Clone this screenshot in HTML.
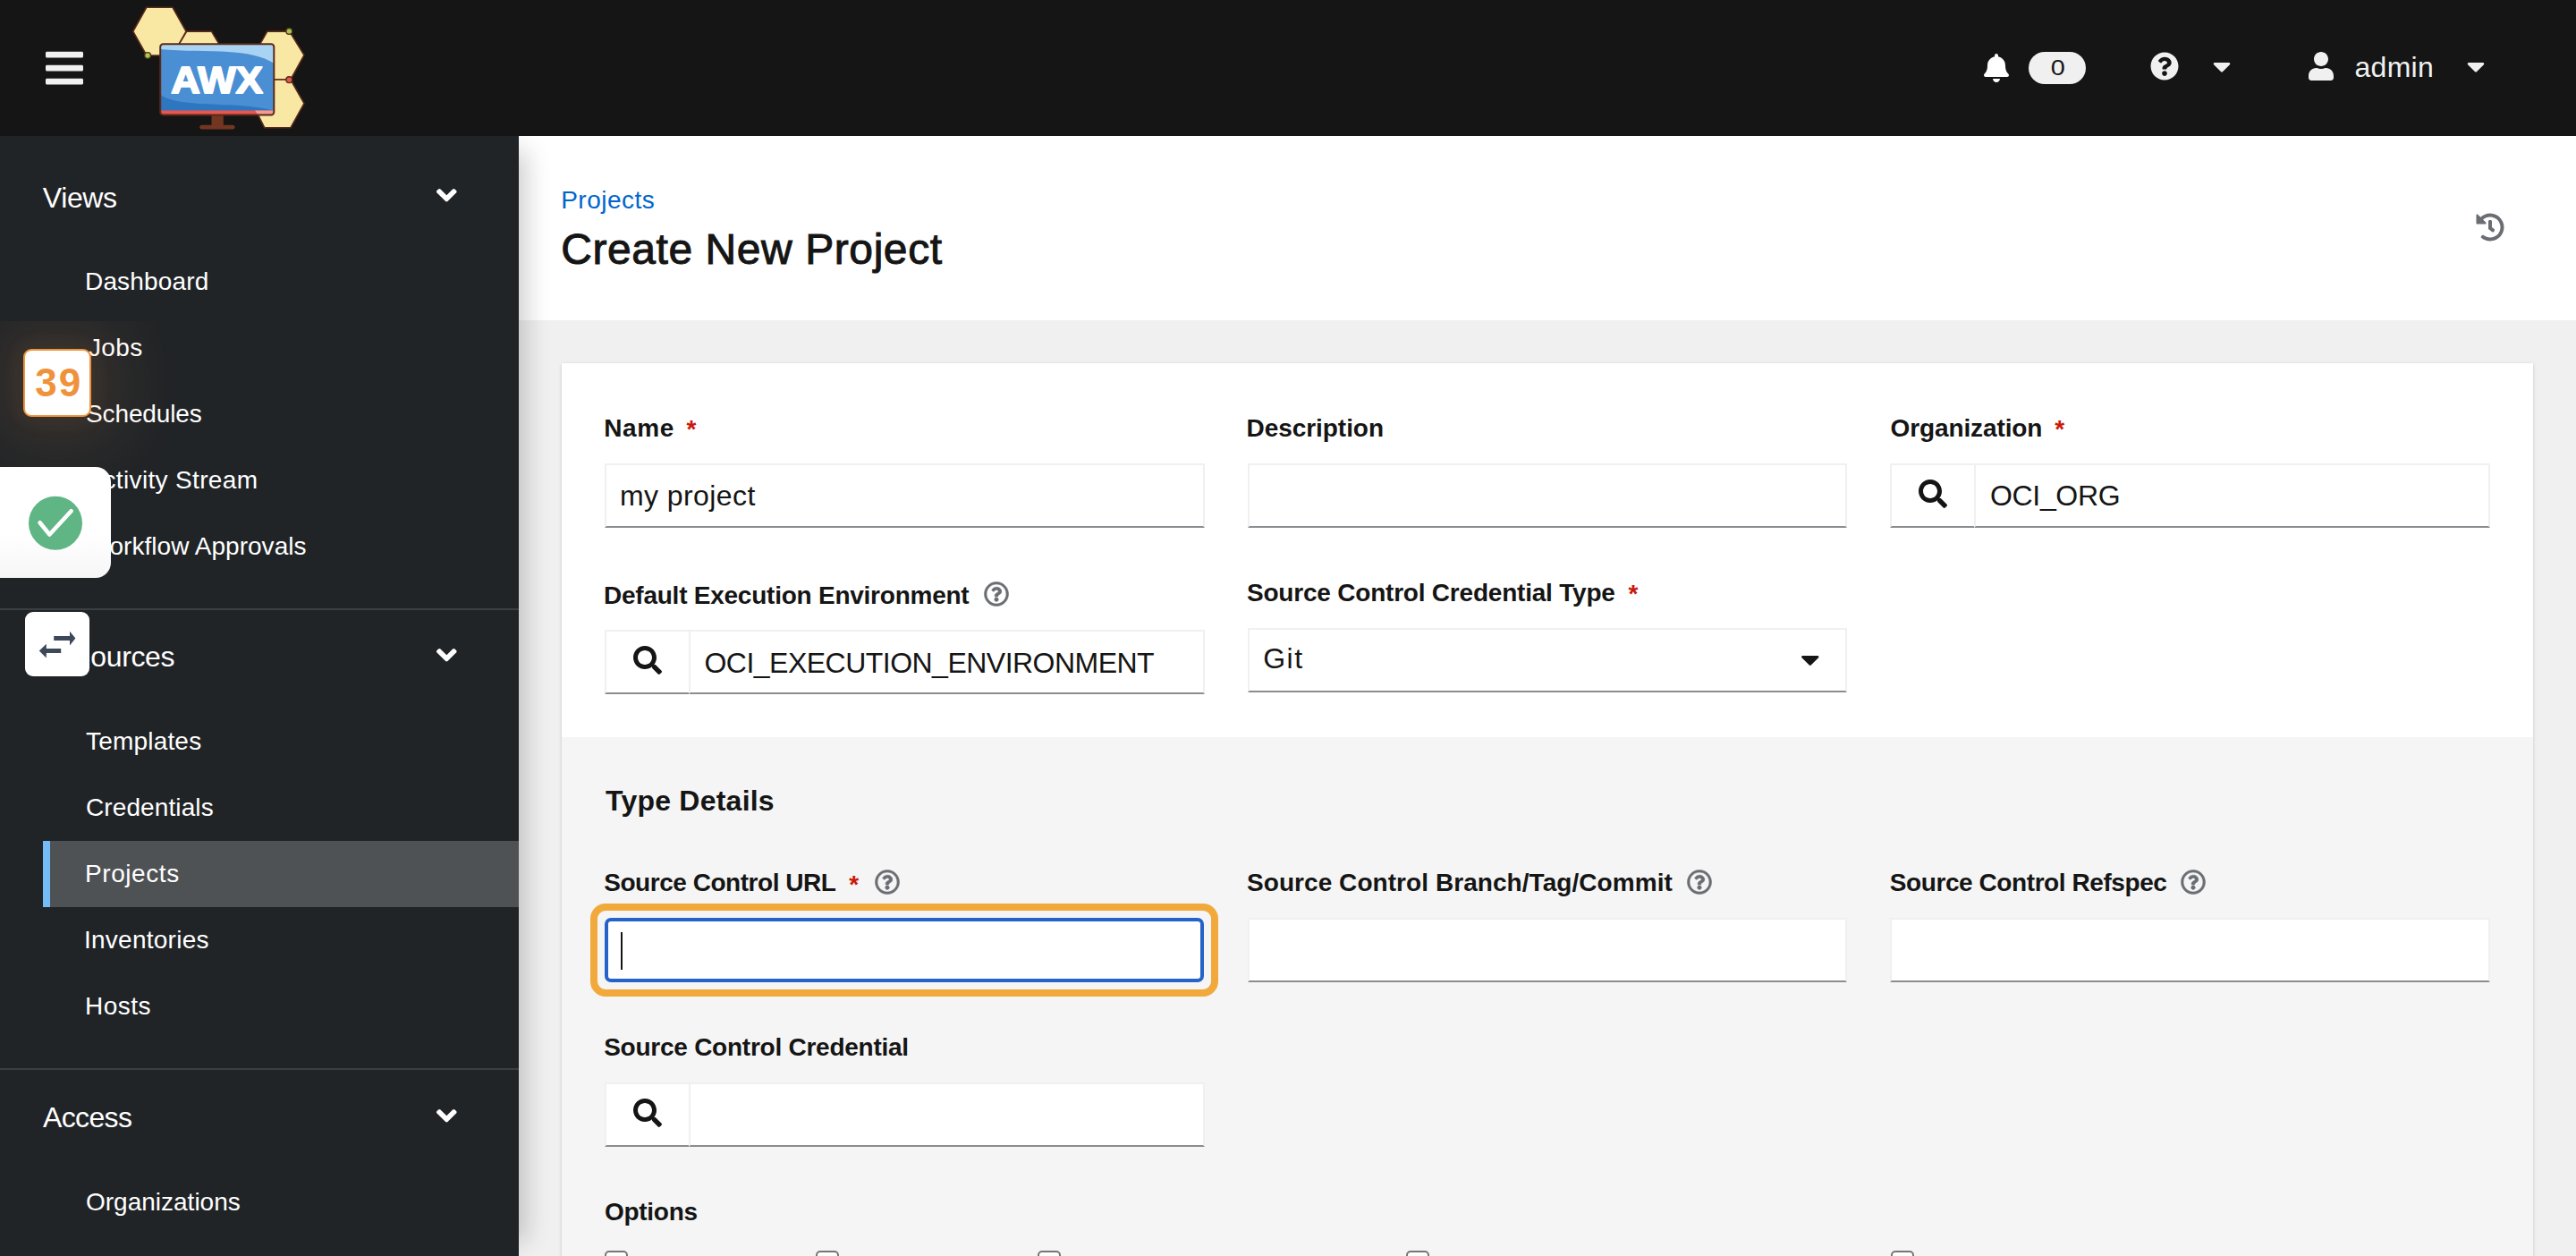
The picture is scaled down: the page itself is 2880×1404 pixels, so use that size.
<!DOCTYPE html>
<html lang="en"><head><meta charset="utf-8"><title>AWX - Create New Project</title>
<style>
*{box-sizing:border-box}
html,body{margin:0;padding:0}
body{width:2880px;height:1404px;overflow:hidden;position:relative;background:#f0f0f0;font-family:"Liberation Sans",sans-serif;color:#151515}
.abs,.ic,.t{position:absolute}
.ic{display:block;overflow:visible}
.t{white-space:nowrap;line-height:1;margin:0;padding:0}
#hdr{left:0;top:0;width:2880px;height:152px;background:#151515}
#side{left:0;top:152px;width:580px;height:1252px;background:#212427;box-shadow:24px 0 26px -16px rgba(3,3,3,.2)}
.sep{left:0;width:580px;height:2px;background:#3c3f42}
#cur{left:48px;top:940px;width:532px;height:74px;background:#4f5255;border-left:8px solid #73bcf7}
#top{left:580px;top:152px;width:2300px;height:206px;background:#fff}
#card{left:628px;top:406px;width:2204px;height:1100px;background:#fff;box-shadow:0 2px 4px rgba(3,3,3,.12),0 0 4px rgba(3,3,3,.06)}
#sub{left:628px;top:824px;width:2204px;height:700px;background:#f5f5f5}
.rq{color:#c9190b;font-size:28px;font-weight:bold}
.inp{background:#fff;border:2px solid #f0f0f0;border-bottom-color:#8a8d90;height:72px}
.cb{width:26px;height:26px;top:1398px;background:#fff;border:2px solid #767676;border-radius:5px}
</style></head><body>

<main>
<div class="abs" id="top"></div>
<div class="t " id="bc" style="left:627.2px;top:210px;font-size:28px;color:#0066cc;font-weight:normal;letter-spacing:0.5px;">Projects</div>
<h1 class="t " id="h1" style="left:627.2px;top:255px;font-size:48px;color:#151515;font-weight:normal;letter-spacing:0.57px;-webkit-text-stroke:1px #151515;">Create New Project</h1>
<svg class="ic" viewBox="0 0 512 512" style="left:2768px;top:238px;width:32.0px;height:32px;fill:#6a6e73;"><path d="M504 255.531c.253 136.640-111.180 248.372-247.820 248.468-59.015.042-113.223-20.530-155.822-54.911-11.077-8.940-11.905-25.541-1.839-35.607l11.267-11.267c8.609-8.609 22.353-9.551 31.891-1.984C173.062 425.135 212.781 440 256 440c101.705 0 184-82.311 184-184 0-101.705-82.311-184-184-184-48.814 0-93.149 18.969-126.068 49.932l50.754 50.754c10.080 10.080 2.941 27.314-11.313 27.314H24c-8.837 0-16-7.163-16-16V38.627c0-14.254 17.234-21.393 27.314-11.314l49.372 49.372C129.209 34.136 189.552 8 256 8c136.810 0 247.747 110.780 248 247.531zm-180.912 78.784l9.823-12.630c8.138-10.463 6.253-25.542-4.210-33.679L288 256.349V152c0-13.255-10.745-24-24-24h-16c-13.255 0-24 10.745-24 24v135.651l65.409 50.874c10.463 8.137 25.541 6.253 33.679-4.210z"/></svg>
<div class="abs" id="card"></div>
<div class="abs" id="sub"></div>
<div class="t " id="l_name" style="left:675.2px;top:465px;font-size:28px;color:#151515;font-weight:bold;letter-spacing:0.6px;">Name</div>
<div class="t rq" style="left:767.5px;top:466px">*</div>
<div class="abs inp" style="left:676px;top:518px;width:670.67px;height:72px"></div>
<div class="t " id="v_name" style="left:693px;top:538px;font-size:32px;color:#151515;font-weight:normal;letter-spacing:0.41px;">my project</div>
<div class="t " id="l_desc" style="left:1393.5px;top:465px;font-size:28px;color:#151515;font-weight:bold;letter-spacing:-0.05px;">Description</div>
<div class="abs inp" style="left:1394.67px;top:518px;width:670.67px;height:72px"></div>
<div class="t " id="l_org" style="left:2113.5px;top:465px;font-size:28px;color:#151515;font-weight:bold;letter-spacing:-0.11px;">Organization</div>
<div class="t rq" style="left:2297.25px;top:466px">*</div>
<div class="abs inp" style="left:2113.33px;top:518px;width:96px;height:72px"></div>
<svg class="ic" viewBox="0 0 512 512" style="left:2145.33px;top:536px;width:32.0px;height:32px;fill:#151515;"><path d="M505 442.7L405.3 343c-4.500-4.500-10.600-7-17-7H372c27.600-35.300 44-79.700 44-128C416 93.100 322.900 0 208 0S0 93.100 0 208s93.100 208 208 208c48.300 0 92.700-16.400 128-44v16.300c0 6.400 2.500 12.500 7 17l99.700 99.700c9.400 9.400 24.600 9.400 33.900 0l28.300-28.300c9.400-9.400 9.400-24.600.1-34zM208 336c-70.700 0-128-57.200-128-128 0-70.700 57.200-128 128-128 70.700 0 128 57.200 128 128 0 70.700-57.200 128-128 128z"/></svg>
<div class="abs inp" style="left:2207.33px;top:518px;width:576.67px;height:72px"></div>
<div class="t " id="v_org" style="left:2225px;top:538px;font-size:32px;color:#151515;font-weight:normal;letter-spacing:-0.33px;">OCI_ORG</div>
<div class="t " id="l_dee" style="left:675px;top:652px;font-size:28px;color:#151515;font-weight:bold;letter-spacing:-0.24px;">Default Execution Environment</div>
<svg class="ic" viewBox="0 0 512 512" style="left:1099.6px;top:650px;width:28.0px;height:28px;fill:#6a6e73;stroke:#6a6e73;stroke-width:9;"><path d="M256 8C119.043 8 8 119.083 8 256c0 136.997 111.043 248 248 248s248-111.003 248-248C504 119.083 392.957 8 256 8zm0 448c-110.532 0-200-89.431-200-200 0-110.495 89.472-200 200-200 110.491 0 200 89.471 200 200 0 110.530-89.431 200-200 200zm107.244-255.200c0 67.052-72.421 68.084-72.421 92.863V300c0 6.627-5.373 12-12 12h-45.647c-6.627 0-12-5.373-12-12v-8.659c0-35.745 27.100-50.034 47.579-61.516 17.561-9.845 28.324-16.541 28.324-29.579 0-17.246-21.999-28.693-39.784-28.693-23.189 0-33.894 10.977-48.942 29.969-4.057 5.120-11.460 6.071-16.666 2.124l-27.824-21.098c-5.107-3.872-6.251-11.066-2.644-16.363C184.846 131.491 214.940 112 261.794 112c49.071 0 101.450 38.304 101.450 88.800zM298 368c0 23.159-18.841 42-42 42s-42-18.841-42-42 18.841-42 42-42 42 18.841 42 42z"/></svg>
<div class="abs inp" style="left:676px;top:704px;width:96px;height:72px"></div>
<svg class="ic" viewBox="0 0 512 512" style="left:708px;top:722px;width:32.0px;height:32px;fill:#151515;"><path d="M505 442.7L405.3 343c-4.500-4.500-10.600-7-17-7H372c27.600-35.300 44-79.700 44-128C416 93.100 322.900 0 208 0S0 93.100 0 208s93.100 208 208 208c48.300 0 92.700-16.400 128-44v16.300c0 6.400 2.500 12.500 7 17l99.700 99.700c9.400 9.400 24.600 9.400 33.900 0l28.300-28.300c9.400-9.400 9.400-24.600.1-34zM208 336c-70.700 0-128-57.200-128-128 0-70.700 57.200-128 128-128 70.700 0 128 57.200 128 128 0 70.700-57.200 128-128 128z"/></svg>
<div class="abs inp" style="left:770px;top:704px;width:576.67px;height:72px"></div>
<div class="t " id="v_ee" style="left:787.5px;top:725px;font-size:32px;color:#151515;font-weight:normal;letter-spacing:-0.52px;">OCI_EXECUTION_ENVIRONMENT</div>
<div class="t " id="l_scct" style="left:1394px;top:649px;font-size:28px;color:#151515;font-weight:bold;letter-spacing:-0.21px;">Source Control Credential Type</div>
<div class="t rq" style="left:1820.5px;top:650px">*</div>
<div class="abs inp" style="left:1394.67px;top:702px;width:670.67px;height:72px"></div>
<div class="t " id="v_git" style="left:1412.2px;top:720px;font-size:32px;color:#151515;font-weight:normal;letter-spacing:1.5px;">Git</div>
<svg class="ic" viewBox="11.3 192 297.3 168.65" style="left:2014px;top:732.5px;width:19.5px;height:11px;fill:#151515;"><path d="M31.3 192h257.3c17.8 0 26.7 21.5 14.1 34.1L174.1 354.8c-7.8 7.8-20.5 7.8-28.3 0L17.2 226.1C4.6 213.5 13.5 192 31.3 192z"/></svg>
<h2 class="t " id="td" style="left:677px;top:879px;font-size:32px;color:#151515;font-weight:bold;letter-spacing:0.23px;">Type Details</h2>
<div class="t " id="l_url" style="left:675.2px;top:973px;font-size:28px;color:#151515;font-weight:bold;letter-spacing:-0.46px;">Source Control URL</div>
<div class="t rq" style="left:949.25px;top:974.5px">*</div>
<svg class="ic" viewBox="0 0 512 512" style="left:977.7px;top:972px;width:28.0px;height:28px;fill:#6a6e73;stroke:#6a6e73;stroke-width:9;"><path d="M256 8C119.043 8 8 119.083 8 256c0 136.997 111.043 248 248 248s248-111.003 248-248C504 119.083 392.957 8 256 8zm0 448c-110.532 0-200-89.431-200-200 0-110.495 89.472-200 200-200 110.491 0 200 89.471 200 200 0 110.530-89.431 200-200 200zm107.244-255.200c0 67.052-72.421 68.084-72.421 92.863V300c0 6.627-5.373 12-12 12h-45.647c-6.627 0-12-5.373-12-12v-8.659c0-35.745 27.100-50.034 47.579-61.516 17.561-9.845 28.324-16.541 28.324-29.579 0-17.246-21.999-28.693-39.784-28.693-23.189 0-33.894 10.977-48.942 29.969-4.057 5.120-11.460 6.071-16.666 2.124l-27.824-21.098c-5.107-3.872-6.251-11.066-2.644-16.363C184.846 131.491 214.940 112 261.794 112c49.071 0 101.450 38.304 101.450 88.800zM298 368c0 23.159-18.841 42-42 42s-42-18.841-42-42 18.841-42 42-42 42 18.841 42 42z"/></svg>
<div class="abs" style="left:660px;top:1010px;width:702px;height:104px;border:8px solid #f2a93b;border-radius:17px"></div>
<div class="abs" style="left:676px;top:1026px;width:670px;height:72px;border:4px solid #2563c9;border-radius:7px;background:#fff"></div>
<div class="abs" style="left:694px;top:1042px;width:2px;height:42px;background:#151515"></div>
<div class="t " id="l_branch" style="left:1394px;top:973px;font-size:28px;color:#151515;font-weight:bold;letter-spacing:0.06px;">Source Control Branch/Tag/Commit</div>
<svg class="ic" viewBox="0 0 512 512" style="left:1886px;top:972px;width:28.0px;height:28px;fill:#6a6e73;stroke:#6a6e73;stroke-width:9;"><path d="M256 8C119.043 8 8 119.083 8 256c0 136.997 111.043 248 248 248s248-111.003 248-248C504 119.083 392.957 8 256 8zm0 448c-110.532 0-200-89.431-200-200 0-110.495 89.472-200 200-200 110.491 0 200 89.471 200 200 0 110.530-89.431 200-200 200zm107.244-255.200c0 67.052-72.421 68.084-72.421 92.863V300c0 6.627-5.373 12-12 12h-45.647c-6.627 0-12-5.373-12-12v-8.659c0-35.745 27.100-50.034 47.579-61.516 17.561-9.845 28.324-16.541 28.324-29.579 0-17.246-21.999-28.693-39.784-28.693-23.189 0-33.894 10.977-48.942 29.969-4.057 5.120-11.460 6.071-16.666 2.124l-27.824-21.098c-5.107-3.872-6.251-11.066-2.644-16.363C184.846 131.491 214.940 112 261.794 112c49.071 0 101.450 38.304 101.450 88.800zM298 368c0 23.159-18.841 42-42 42s-42-18.841-42-42 18.841-42 42-42 42 18.841 42 42z"/></svg>
<div class="abs inp" style="left:1394.67px;top:1026px;width:670.67px;height:72px"></div>
<div class="t " id="l_ref" style="left:2112.8px;top:973px;font-size:28px;color:#151515;font-weight:bold;letter-spacing:-0.42px;">Source Control Refspec</div>
<svg class="ic" viewBox="0 0 512 512" style="left:2437.7px;top:972px;width:28.0px;height:28px;fill:#6a6e73;stroke:#6a6e73;stroke-width:9;"><path d="M256 8C119.043 8 8 119.083 8 256c0 136.997 111.043 248 248 248s248-111.003 248-248C504 119.083 392.957 8 256 8zm0 448c-110.532 0-200-89.431-200-200 0-110.495 89.472-200 200-200 110.491 0 200 89.471 200 200 0 110.530-89.431 200-200 200zm107.244-255.200c0 67.052-72.421 68.084-72.421 92.863V300c0 6.627-5.373 12-12 12h-45.647c-6.627 0-12-5.373-12-12v-8.659c0-35.745 27.100-50.034 47.579-61.516 17.561-9.845 28.324-16.541 28.324-29.579 0-17.246-21.999-28.693-39.784-28.693-23.189 0-33.894 10.977-48.942 29.969-4.057 5.120-11.460 6.071-16.666 2.124l-27.824-21.098c-5.107-3.872-6.251-11.066-2.644-16.363C184.846 131.491 214.940 112 261.794 112c49.071 0 101.450 38.304 101.450 88.800zM298 368c0 23.159-18.841 42-42 42s-42-18.841-42-42 18.841-42 42-42 42 18.841 42 42z"/></svg>
<div class="abs inp" style="left:2113.33px;top:1026px;width:670.67px;height:72px"></div>
<div class="t " id="l_scc" style="left:675.2px;top:1157px;font-size:28px;color:#151515;font-weight:bold;letter-spacing:-0.25px;">Source Control Credential</div>
<div class="abs inp" style="left:676px;top:1210px;width:96px;height:72px"></div>
<svg class="ic" viewBox="0 0 512 512" style="left:708px;top:1228px;width:32.0px;height:32px;fill:#151515;"><path d="M505 442.7L405.3 343c-4.500-4.500-10.600-7-17-7H372c27.600-35.300 44-79.700 44-128C416 93.100 322.900 0 208 0S0 93.100 0 208s93.100 208 208 208c48.300 0 92.700-16.400 128-44v16.300c0 6.400 2.500 12.500 7 17l99.700 99.700c9.400 9.400 24.600 9.400 33.900 0l28.300-28.300c9.400-9.400 9.400-24.600.1-34zM208 336c-70.700 0-128-57.200-128-128 0-70.700 57.200-128 128-128 70.700 0 128 57.200 128 128 0 70.700-57.200 128-128 128z"/></svg>
<div class="abs inp" style="left:770px;top:1210px;width:576.67px;height:72px"></div>
<div class="t " id="l_opt" style="left:676px;top:1341px;font-size:28px;color:#151515;font-weight:bold;letter-spacing:-0.29px;">Options</div>
<div class="abs cb" style="left:676px"></div>
<div class="abs cb" style="left:912px"></div>
<div class="abs cb" style="left:1160px"></div>
<div class="abs cb" style="left:1572px"></div>
<div class="abs cb" style="left:2114px"></div>
</main>
<nav><div id="side" class="abs"></div>
<div class="abs" id="cur"></div>
<div class="t " id="n_views" style="left:47.8px;top:205px;font-size:32px;color:#fff;font-weight:normal;letter-spacing:-0.37px;">Views</div>
<svg class="ic" viewBox="0 152.75 320 206.6" style="left:487.5px;top:211.3px;width:22.6px;height:14.6px;fill:#fff;"><path d="M143 352.3L7 216.3c-9.4-9.4-9.4-24.6 0-33.9l22.6-22.6c9.4-9.4 24.6-9.4 33.9 0l96.400 96.400 96.400-96.400c9.400-9.400 24.600-9.400 33.900 0l22.600 22.600c9.400 9.400 9.400 24.600 0 33.900l-136 136c-9.200 9.400-24.400 9.400-33.800 0z"/></svg>
<div class="t " id="n_dash" style="left:95px;top:301px;font-size:28px;color:#fff;font-weight:normal;letter-spacing:0.16px;">Dashboard</div>
<div class="t " id="n_jobs" style="left:99px;top:375px;font-size:28px;color:#fff;font-weight:normal;letter-spacing:0.33px;">Jobs</div>
<div class="t " id="n_sched" style="left:96px;top:449px;font-size:28px;color:#fff;font-weight:normal;letter-spacing:-0.12px;">Schedules</div>
<div class="t " id="n_act" style="left:96.5px;top:523px;font-size:28px;color:#fff;font-weight:normal;letter-spacing:0.34px;">Activity Stream</div>
<div class="t " id="n_wf" style="left:96.5px;top:597px;font-size:28px;color:#fff;font-weight:normal;letter-spacing:0.04px;">Workflow Approvals</div>
<div class="abs sep" style="top:680px"></div>
<div class="t " id="n_res" style="left:47.5px;top:718px;font-size:32px;color:#fff;font-weight:normal;letter-spacing:-2.0px;">Res</div>
<div class="t " id="n_res2" style="left:101.3px;top:718px;font-size:32px;color:#fff;font-weight:normal;letter-spacing:-0.36px;">ources</div>
<svg class="ic" viewBox="0 152.75 320 206.6" style="left:487.5px;top:725.3px;width:22.6px;height:14.6px;fill:#fff;"><path d="M143 352.3L7 216.3c-9.4-9.4-9.4-24.6 0-33.9l22.6-22.6c9.4-9.4 24.6-9.4 33.9 0l96.400 96.400 96.400-96.400c9.400-9.400 24.600-9.400 33.900 0l22.600 22.600c9.400 9.400 9.400 24.600 0 33.900l-136 136c-9.200 9.400-24.400 9.400-33.800 0z"/></svg>
<div class="t " id="n_tmpl" style="left:96px;top:815px;font-size:28px;color:#fff;font-weight:normal;letter-spacing:0.19px;">Templates</div>
<div class="t " id="n_cred" style="left:96px;top:889px;font-size:28px;color:#fff;font-weight:normal;letter-spacing:0.1px;">Credentials</div>
<div class="t " id="n_proj" style="left:95px;top:963px;font-size:28px;color:#fff;font-weight:normal;letter-spacing:0.57px;">Projects</div>
<div class="t " id="n_inv" style="left:94px;top:1037px;font-size:28px;color:#fff;font-weight:normal;letter-spacing:0.25px;">Inventories</div>
<div class="t " id="n_hosts" style="left:95px;top:1111px;font-size:28px;color:#fff;font-weight:normal;letter-spacing:0.5px;">Hosts</div>
<div class="abs sep" style="top:1194px"></div>
<div class="t " id="n_acc" style="left:48px;top:1233px;font-size:32px;color:#fff;font-weight:normal;letter-spacing:-0.65px;">Access</div>
<svg class="ic" viewBox="0 152.75 320 206.6" style="left:487.5px;top:1240px;width:22.6px;height:14.6px;fill:#fff;"><path d="M143 352.3L7 216.3c-9.4-9.4-9.4-24.6 0-33.9l22.6-22.6c9.4-9.4 24.6-9.4 33.9 0l96.400 96.400 96.400-96.400c9.400-9.400 24.600-9.400 33.900 0l22.600 22.600c9.400 9.400 9.400 24.600 0 33.900l-136 136c-9.200 9.400-24.400 9.400-33.800 0z"/></svg>
<div class="t " id="n_org" style="left:96px;top:1330px;font-size:28px;color:#fff;font-weight:normal;">Organizations</div>
</nav>
<header><div id="hdr" class="abs"></div>
<svg class="ic" viewBox="0 0 448 512" style="left:51px;top:52px;width:42.0px;height:48px;fill:#f0f0f0;"><path d="M16 132h416c8.837 0 16-7.163 16-16V76c0-8.837-7.163-16-16-16H16C7.163 60 0 67.163 0 76v40c0 8.837 7.163 16 16 16zm0 160h416c8.837 0 16-7.163 16-16v-40c0-8.837-7.163-16-16-16H16c-8.837 0-16 7.163-16 16v40c0 8.837 7.163 16 16 16zm0 160h416c8.837 0 16-7.163 16-16v-40c0-8.837-7.163-16-16-16H16c-8.837 0-16 7.163-16 16v40c0 8.837 7.163 16 16 16z"/></svg>
<svg class="ic" viewBox="0 0 240 152" style="left:130px;top:0;width:240px;height:152px" font-family="Liberation Sans, sans-serif">
<g stroke="#5a2a1a" stroke-width="1.6" stroke-linejoin="round" fill="#f9e7a4">
<polygon points="18.8,35.1 33.9,8.2 62.9,8.2 78.1,35.1 62.9,62 33.9,62"/>
<polygon points="70.8,48.4 78.7,35.1 106.5,35.1 114.4,48.4 106.5,62 78.7,62"/>
<polygon points="153.7,61.7 168.8,35.1 193.6,35.1 210,61.7 194.9,89 168.8,89"/>
<polygon points="152,115.600 165.800,89 194.900,89 210,115.600 194.900,142.800 165.800,142.800"/>
</g>
<circle cx="35.1" cy="62" r="3.4" fill="#9bcf4f" stroke="#5a2a1a" stroke-width="1.4"/>
<circle cx="193.3" cy="34.9" r="3.4" fill="#9bcf4f" stroke="#5a2a1a" stroke-width="1.4"/>
<rect x="106.5" y="128" width="13.3" height="13" fill="#733620"/>
<rect x="93.2" y="139.8" width="39.3" height="4.8" rx="2.4" fill="#733620"/>
<clipPath id="scr"><rect x="49.2" y="49.2" width="127.1" height="79.3" rx="3.2"/></clipPath>
<g clip-path="url(#scr)">
<rect x="48" y="48" width="130" height="82" fill="#4a8fd3"/>
<path d="M48 48H178V72C150 52 100 60 48 55Z" fill="#a9d3f3"/>
<path d="M48 105C70 122 130 112 178 124V130H48Z" fill="#2e76bf"/>
<rect x="48" y="123.5" width="130" height="7" fill="#e9554f"/>
<path d="M155 123.500H178V130.500H160Z" fill="#f29a94"/>
</g>
<rect x="49.200" y="49.200" width="127.100" height="79.300" rx="3.200" fill="none" stroke="#5a2a1a" stroke-width="2"/>
<circle cx="193.300" cy="89.200" r="3.400" fill="#e9554f" stroke="#5a2a1a" stroke-width="1.400"/>
<text x="61.300" y="104.100" font-size="42" font-weight="bold" fill="#fff" stroke="#fff" stroke-width="2" stroke-linejoin="round" textLength="102.500" lengthAdjust="spacingAndGlyphs">AWX</text>
</svg>
<svg class="ic" viewBox="0 0 448 512" style="left:2217.8px;top:60px;width:28.0px;height:32px;fill:#fff;"><path d="M224 512c35.32 0 63.97-28.65 63.97-64H160.03c0 35.35 28.65 64 63.97 64zm215.39-149.71c-19.32-20.76-55.47-51.99-55.47-154.29 0-77.7-54.48-139.9-127.94-155.16V32c0-17.67-14.32-32-31.98-32s-31.98 14.33-31.98 32v20.84C118.56 68.1 64.08 130.3 64.08 208c0 102.3-36.15 133.53-55.47 154.29-6 6.45-8.66 14.16-8.61 21.71.11 16.4 12.98 32 32.1 32h383.8c19.12 0 32-15.6 32.1-32 .05-7.55-2.61-15.27-8.61-21.71z"/></svg>
<div class="abs" style="left:2268px;top:58px;width:64px;height:36px;border-radius:18px;background:#f0f0f0"></div>
<div class="t " id="badge" style="left:2293.5px;top:64px;font-size:24px;color:#151515;font-weight:normal;transform:scaleX(1.2);transform-origin:center;">0</div>
<svg class="ic" viewBox="0 0 512 512" style="left:2404.1px;top:58px;width:32.0px;height:32px;fill:#f0f0f0;"><path d="M504 256c0 136.997-111.043 248-248 248S8 392.997 8 256C8 119.083 119.043 8 256 8s248 111.083 248 248zM262.655 90c-54.497 0-89.255 22.957-116.549 63.758-3.536 5.286-2.353 12.415 2.715 16.258l34.699 26.31c5.205 3.947 12.621 3.008 16.665-2.122 17.864-22.658 30.113-35.797 57.303-35.797 20.429 0 45.698 13.148 45.698 32.958 0 14.976-12.363 22.667-32.534 33.976C247.128 238.528 216 254.941 216 296v4c0 6.627 5.373 12 12 12h56c6.627 0 12-5.373 12-12v-1.333c0-28.462 83.186-29.647 83.186-106.667 0-58.002-60.165-102-116.531-102zM256 338c-25.365 0-46 20.635-46 46 0 25.364 20.635 46 46 46s46-20.636 46-46c0-25.365-20.635-46-46-46z"/></svg>
<svg class="ic" viewBox="0 0 320 512" style="left:2473.7px;top:57.75px;width:20.0px;height:32px;fill:#f0f0f0;"><path d="M31.3 192h257.3c17.8 0 26.7 21.5 14.1 34.1L174.1 354.8c-7.8 7.8-20.5 7.8-28.3 0L17.2 226.1C4.6 213.5 13.5 192 31.3 192z"/></svg>
<svg class="ic" viewBox="0 0 448 512" style="left:2581.4px;top:58px;width:28.0px;height:32px;fill:#f0f0f0;"><path d="M224 256c70.7 0 128-57.3 128-128S294.7 0 224 0 96 57.3 96 128s57.3 128 128 128zm89.6 32h-16.7c-22.2 10.2-46.9 16-72.9 16s-50.6-5.8-72.9-16h-16.7C60.2 288 0 348.2 0 422.4V464c0 26.5 21.5 48 48 48h352c26.5 0 48-21.5 48-48v-41.6c0-74.2-60.2-134.4-134.4-134.4z"/></svg>
<div class="t " id="admin" style="left:2632.5px;top:59px;font-size:32px;color:#f0f0f0;font-weight:normal;letter-spacing:0.27px;">admin</div>
<svg class="ic" viewBox="0 0 320 512" style="left:2757.5px;top:57.75px;width:20.0px;height:32px;fill:#f0f0f0;"><path d="M31.3 192h257.3c17.8 0 26.7 21.5 14.1 34.1L174.1 354.8c-7.8 7.8-20.5 7.8-28.3 0L17.2 226.1C4.6 213.5 13.5 192 31.3 192z"/></svg>
</header>
<div class="abs" style="left:0;top:359px;width:320px;height:300px;overflow:hidden"><div class="abs" style="left:26px;top:31px;width:76px;height:76px;background:#fff;border:2.5px solid #f0923a;border-radius:9px;box-shadow:0 0 70px 34px rgba(236,160,100,.11),0 0 24px 4px rgba(236,150,80,.07)"></div></div>
<div class="t " id="n39" style="left:39.2px;top:406px;font-size:44px;color:#f0923a;font-weight:bold;letter-spacing:2.0px;">39</div>
<div class="abs" style="left:0;top:522px;width:124px;height:124px;background:linear-gradient(#fff 60%,#f6f6f6);border-radius:0 17px 17px 0"></div>
<svg class="ic" viewBox="0 0 124 124" style="left:0;top:522px;width:124px;height:124px"><circle cx="62" cy="62.700" r="30" fill="#5fb584"/><polyline points="44.600,62.300 55.400,75.500 79.600,49.300" fill="none" stroke="#fff" stroke-width="4.6" stroke-linecap="round" stroke-linejoin="round"/></svg>
<div class="abs" style="left:28px;top:684px;width:72px;height:72px;background:#fff;border-radius:9px"></div>
<svg class="ic" viewBox="0 0 72 72" style="left:28px;top:684px;width:72px;height:72px;fill:#3d4858"><path d="M32.200 27V32H50V37.500L56.400 29.500 50 21.800V27ZM40.200 41V46H23.800V51.500L15.800 43.500 23.800 35.800V41Z"/></svg>

</body></html>
